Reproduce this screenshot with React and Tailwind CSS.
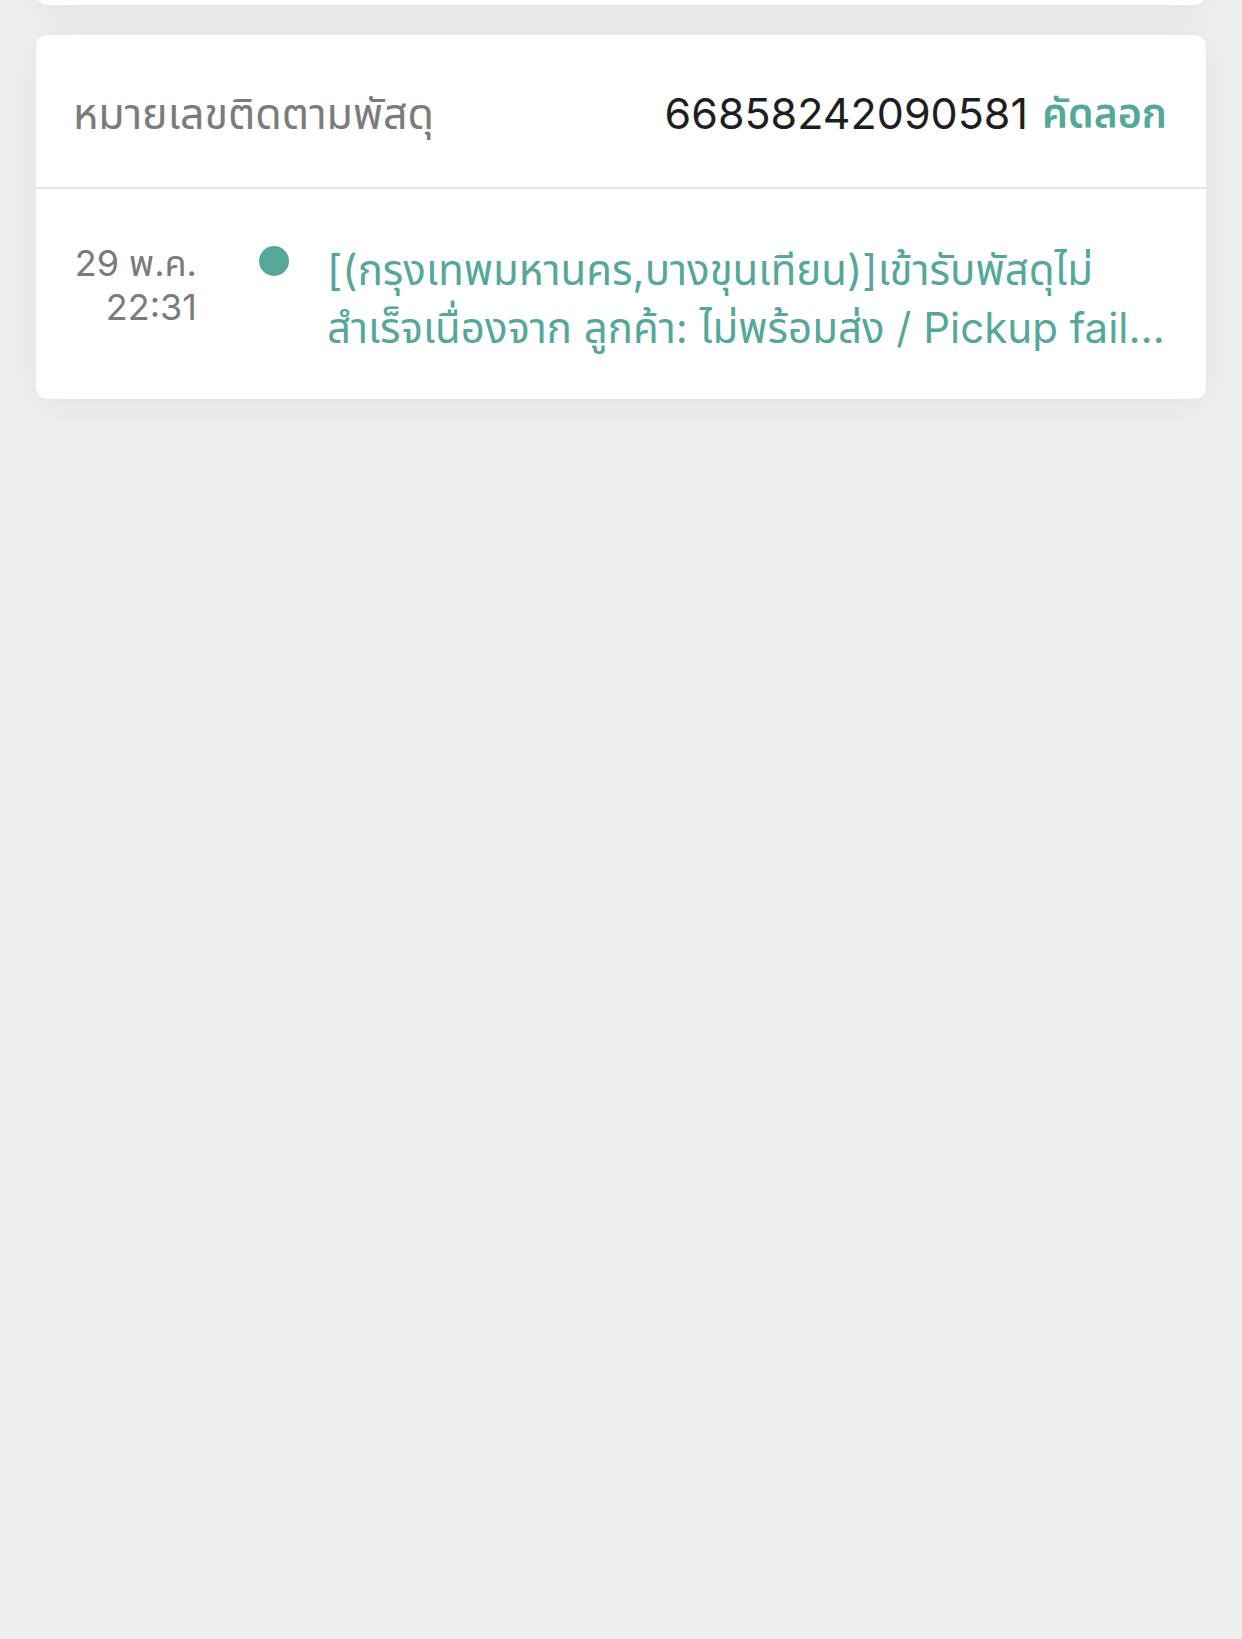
import React from "react";

const font = { fontFamily: '"Inter", "Noto Sans Thai", "Noto Sans", sans-serif' };

const TrackingCard = ({ trackingNo, events }) => {
  return (
    <div className="bg-white rounded-[12px] shadow-[0_6px_40px_rgba(0,0,0,0.06)]">
      <div className="h-[154px] pt-[5px] flex items-center justify-between pl-[37px] pr-[39px] border-b-2 border-[#e6e6e6]">
        <p className="text-[43px] text-[#7b7b7b] whitespace-nowrap">หมายเลขติดตามพัสดุ</p>
        <p className="flex items-center gap-[14px] whitespace-nowrap">
          <span className="text-[43px] text-[#1e1e1e]">{trackingNo}</span>
          <button type="button" className="text-[41px] font-semibold text-[#55a899]">
            คัดลอก
          </button>
        </p>
      </div>
      {events.map((ev, i) => (
        <div key={i} className="flex items-start pl-[37px] pr-[39px] pt-[52px] pb-[42px]">
          <div className="w-[124px] shrink-0 flex flex-col items-end text-[36px] leading-[44px] text-[#7b7b7b] whitespace-nowrap">
            <span>{ev.date}</span>
            <span>{ev.time}</span>
          </div>
          <div className="shrink-0 ml-[62px] mr-[38px] pt-[5px]">
            <div className="w-[30px] h-[30px] rounded-full bg-[#55a899]" />
          </div>
          <p className="flex-1 min-w-0 text-[42px] leading-[58px] text-[#55a899] line-clamp-2">
            {ev.text}
            <span className="break-all">{ev.textEn}</span>
          </p>
        </div>
      ))}
    </div>
  );
};

export default function App() {
  const events = [
    {
      date: "29 พ.ค.",
      time: "22:31",
      text: "[(กรุงเทพมหานคร,บางขุนเทียน)]เข้ารับพัสดุไม่สำเร็จเนื่องจาก ลูกค้า: ไม่พร้อมส่ง / ",
      textEn: "Pickup failed due to customer not ready",
    },
  ];
  return (
    <div className="min-h-[1639px] bg-[#efefef] px-[36px] overflow-hidden" style={font}>
      <div className="-mt-[60px] h-[65px] bg-white rounded-[12px] shadow-[0_6px_40px_rgba(0,0,0,0.06)]" />
      <div className="mt-[30px]">
        <TrackingCard trackingNo="66858242090581" events={events} />
      </div>
    </div>
  );
}
